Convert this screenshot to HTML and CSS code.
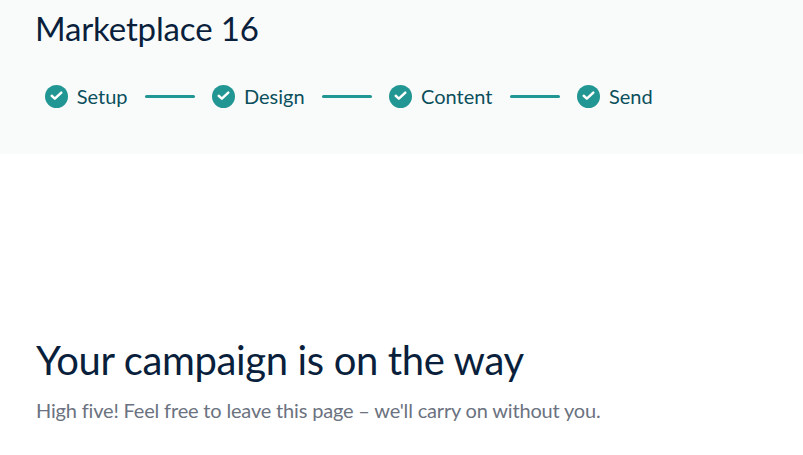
FILE: index.html
```html
<!DOCTYPE html>
<html lang="en">
<head>
    <meta charset="UTF-8">
    <meta name="viewport" content="width=device-width, initial-scale=1.0">
    <title>Marketplace 16</title>
    <link rel="stylesheet" href="styles.css">
</head>
<body>
    <header class="campaign-header">
        <h1 class="campaign-name">Marketplace 16</h1>
        <ol class="steps">
            <li class="step">
                <svg class="step-icon" viewBox="0 0 24 24"><circle cx="12" cy="12" r="12" fill="#229692"/><path d="M7 11.2l3.3 3 6.7-6.2" fill="none" stroke="#fff" stroke-width="2.6" stroke-linecap="round" stroke-linejoin="round"/></svg>
                <span>Setup</span>
            </li>
            <li class="step-line"></li>
            <li class="step">
                <svg class="step-icon" viewBox="0 0 24 24"><circle cx="12" cy="12" r="12" fill="#229692"/><path d="M7 11.2l3.3 3 6.7-6.2" fill="none" stroke="#fff" stroke-width="2.6" stroke-linecap="round" stroke-linejoin="round"/></svg>
                <span>Design</span>
            </li>
            <li class="step-line"></li>
            <li class="step">
                <svg class="step-icon" viewBox="0 0 24 24"><circle cx="12" cy="12" r="12" fill="#229692"/><path d="M7 11.2l3.3 3 6.7-6.2" fill="none" stroke="#fff" stroke-width="2.6" stroke-linecap="round" stroke-linejoin="round"/></svg>
                <span>Content</span>
            </li>
            <li class="step-line"></li>
            <li class="step">
                <svg class="step-icon" viewBox="0 0 24 24"><circle cx="12" cy="12" r="12" fill="#229692"/><path d="M7 11.2l3.3 3 6.7-6.2" fill="none" stroke="#fff" stroke-width="2.6" stroke-linecap="round" stroke-linejoin="round"/></svg>
                <span>Send</span>
            </li>
        </ol>
    </header>
    <main class="confirmation">
        <h2 class="confirmation-title">Your campaign is on the way</h2>
        <p class="confirmation-text">High five! Feel free to leave this page – we'll carry on without you.</p>
    </main>
</body>
</html>
```

FILE: styles.css
```css
html, body {
    margin: 0;
    padding: 0;
}

body {
    background: #ffffff;
    font-family: 'Lato', sans-serif;
    overflow: hidden;
}

.campaign-header {
    background-color: #f9fbfb;
    height: 154px;
    box-sizing: border-box;
    padding: 8px 36px 0;
}

.campaign-name {
    margin: 0 0 0 -1px;
    font-size: 33px;
    line-height: 40px;
    font-weight: 400;
    letter-spacing: -0.15px;
    color: #0a1f3c;
}

.steps {
    list-style: none;
    margin: 36px 0 0 9px;
    padding: 0;
    display: flex;
    align-items: center;
    gap: 17.4px;
}

.step {
    display: flex;
    align-items: center;
    gap: 8.7px;
    font-size: 20px;
    line-height: 24px;
    color: #0b4f5c;
}

.step-icon {
    width: 23px;
    height: 23px;
}

.step-line {
    width: 50px;
    height: 3px;
    border-radius: 2px;
    background-color: #229692;
}

.confirmation {
    padding: 180px 36px 0;
}

.confirmation-title {
    margin: 0;
    font-size: 40px;
    line-height: 52px;
    font-weight: 400;
    letter-spacing: -0.36px;
    color: #0a1f3c;
}

.confirmation-text {
    margin: 10px 0 0;
    font-size: 20px;
    line-height: 28px;
    letter-spacing: -0.175px;
    color: #6b7280;
}
```
